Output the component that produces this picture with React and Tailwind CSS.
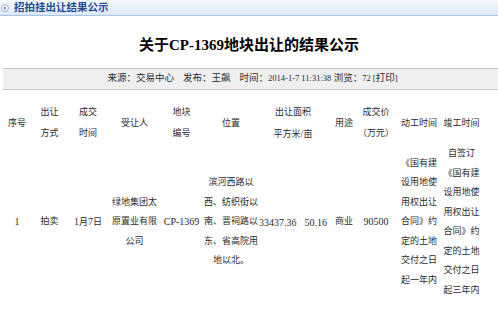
import React from "react";

const head = [
  ["序号"],
  ["出让", "方式"],
  ["成交", "时间"],
  ["受让人"],
  ["地块", "编号"],
  ["位置"],
  ["出让面积", "平方米/亩"],
  ["用途"],
  ["成交价", "（万元）"],
  ["动工时间"],
  ["竣工时间"],
];

const data = [
  ["1"],
  ["拍卖"],
  ["1月7日"],
  ["绿地集团太", "原置业有限", "公司"],
  ["CP-1369"],
  ["滨河西路以", "西、纺织街以", "南、晋祠路以", "东、省高院用", "地以北。"],
  null,
  ["商业"],
  ["90500"],
  ["《国有建", "设用地使", "用权出让", "合同》约", "定的土地", "交付之日", "起一年内"],
  ["自签订", "《国有建", "设用地使", "用权出让", "合同》约", "定的土地", "交付之日", "起三年内"],
];

function Mixed({ text }) {
  const parts = text.split(/([\x20-\x7E]+)/).filter((p) => p !== "");
  return (
    <>
      {parts.map((p, i) =>
        /^[\x20-\x7E]+$/.test(p) ? (
          <span key={i} className="text-[10px]">{p}</span>
        ) : (
          <span key={i}>{p}</span>
        )
      )}
    </>
  );
}

export default function App() {
  return (
    <div className="w-[498px] h-[330px] bg-white overflow-hidden font-['Liberation_Serif','Noto_Sans_CJK_SC',serif] text-[#2b2b2b]">
      <div className="h-[16px] border-b border-[#a9c3e3] bg-gradient-to-b from-[#f6f9fe] to-[#dde8f6] flex items-center gap-[5px] pl-[1px]">
        <svg width="8" height="8" viewBox="0 0 8 8">
          <circle cx="4" cy="4" r="3.5" fill="#f4f7fb" stroke="#9fb2cc" strokeWidth="1" />
          <path d="M3 2.3 L5.4 4 L3 5.7 Z" fill="#6f85a6" />
        </svg>
        <span className="text-[10.5px] font-bold text-[#1d4e8f] font-['Noto_Sans_CJK_SC',sans-serif] leading-none">
          招拍挂出让结果公示
        </span>
      </div>

      <div className="mt-[19px] h-[20px] flex items-center justify-center text-[15px] font-bold text-black leading-[20px]">
        关于CP-1369地块出让的结果公示
      </div>

      <div className="mt-[13px] ml-[3px] h-[22px] border-y border-[#c6c6c6] bg-[#efefef] flex items-center justify-center text-[9.5px] leading-none gap-[9px] pl-[4px]">
        <span>来源：交易中心</span>
        <span>发布：王飙</span>
        <span>
          时间：<span className="text-[8.5px]">2014-1-7 11:31:38</span> 浏览：<span className="text-[8.5px]">72 [</span>打印<span className="text-[8.5px]">]</span>
        </span>
      </div>

      <div className="mt-[12px] grid grid-cols-[34px_31px_46px_47px_47px_52px_72px_30px_34px_52px_33px] text-[9px]">
        {head.map((lines, i) => (
          <div key={"h" + i} className="h-[42px] flex flex-col items-center justify-center leading-[21px]">
            {lines.map((l, j) => (
              <div key={j} className="whitespace-nowrap"><Mixed text={l} /></div>
            ))}
          </div>
        ))}
        {data.map((lines, i) =>
          lines === null ? (
            <div key={"d" + i} className="h-[156px] flex items-center justify-center gap-[8px] whitespace-nowrap text-[10px]">
              <span>33437.36</span>
              <span>50.16</span>
            </div>
          ) : (
            <div key={"d" + i} className="h-[156px] flex flex-col items-center justify-center leading-[19.5px]">
              {lines.map((l, j) => (
                <div key={j} className="whitespace-nowrap"><Mixed text={l} /></div>
              ))}
            </div>
          )
        )}
      </div>
    </div>
  );
}
